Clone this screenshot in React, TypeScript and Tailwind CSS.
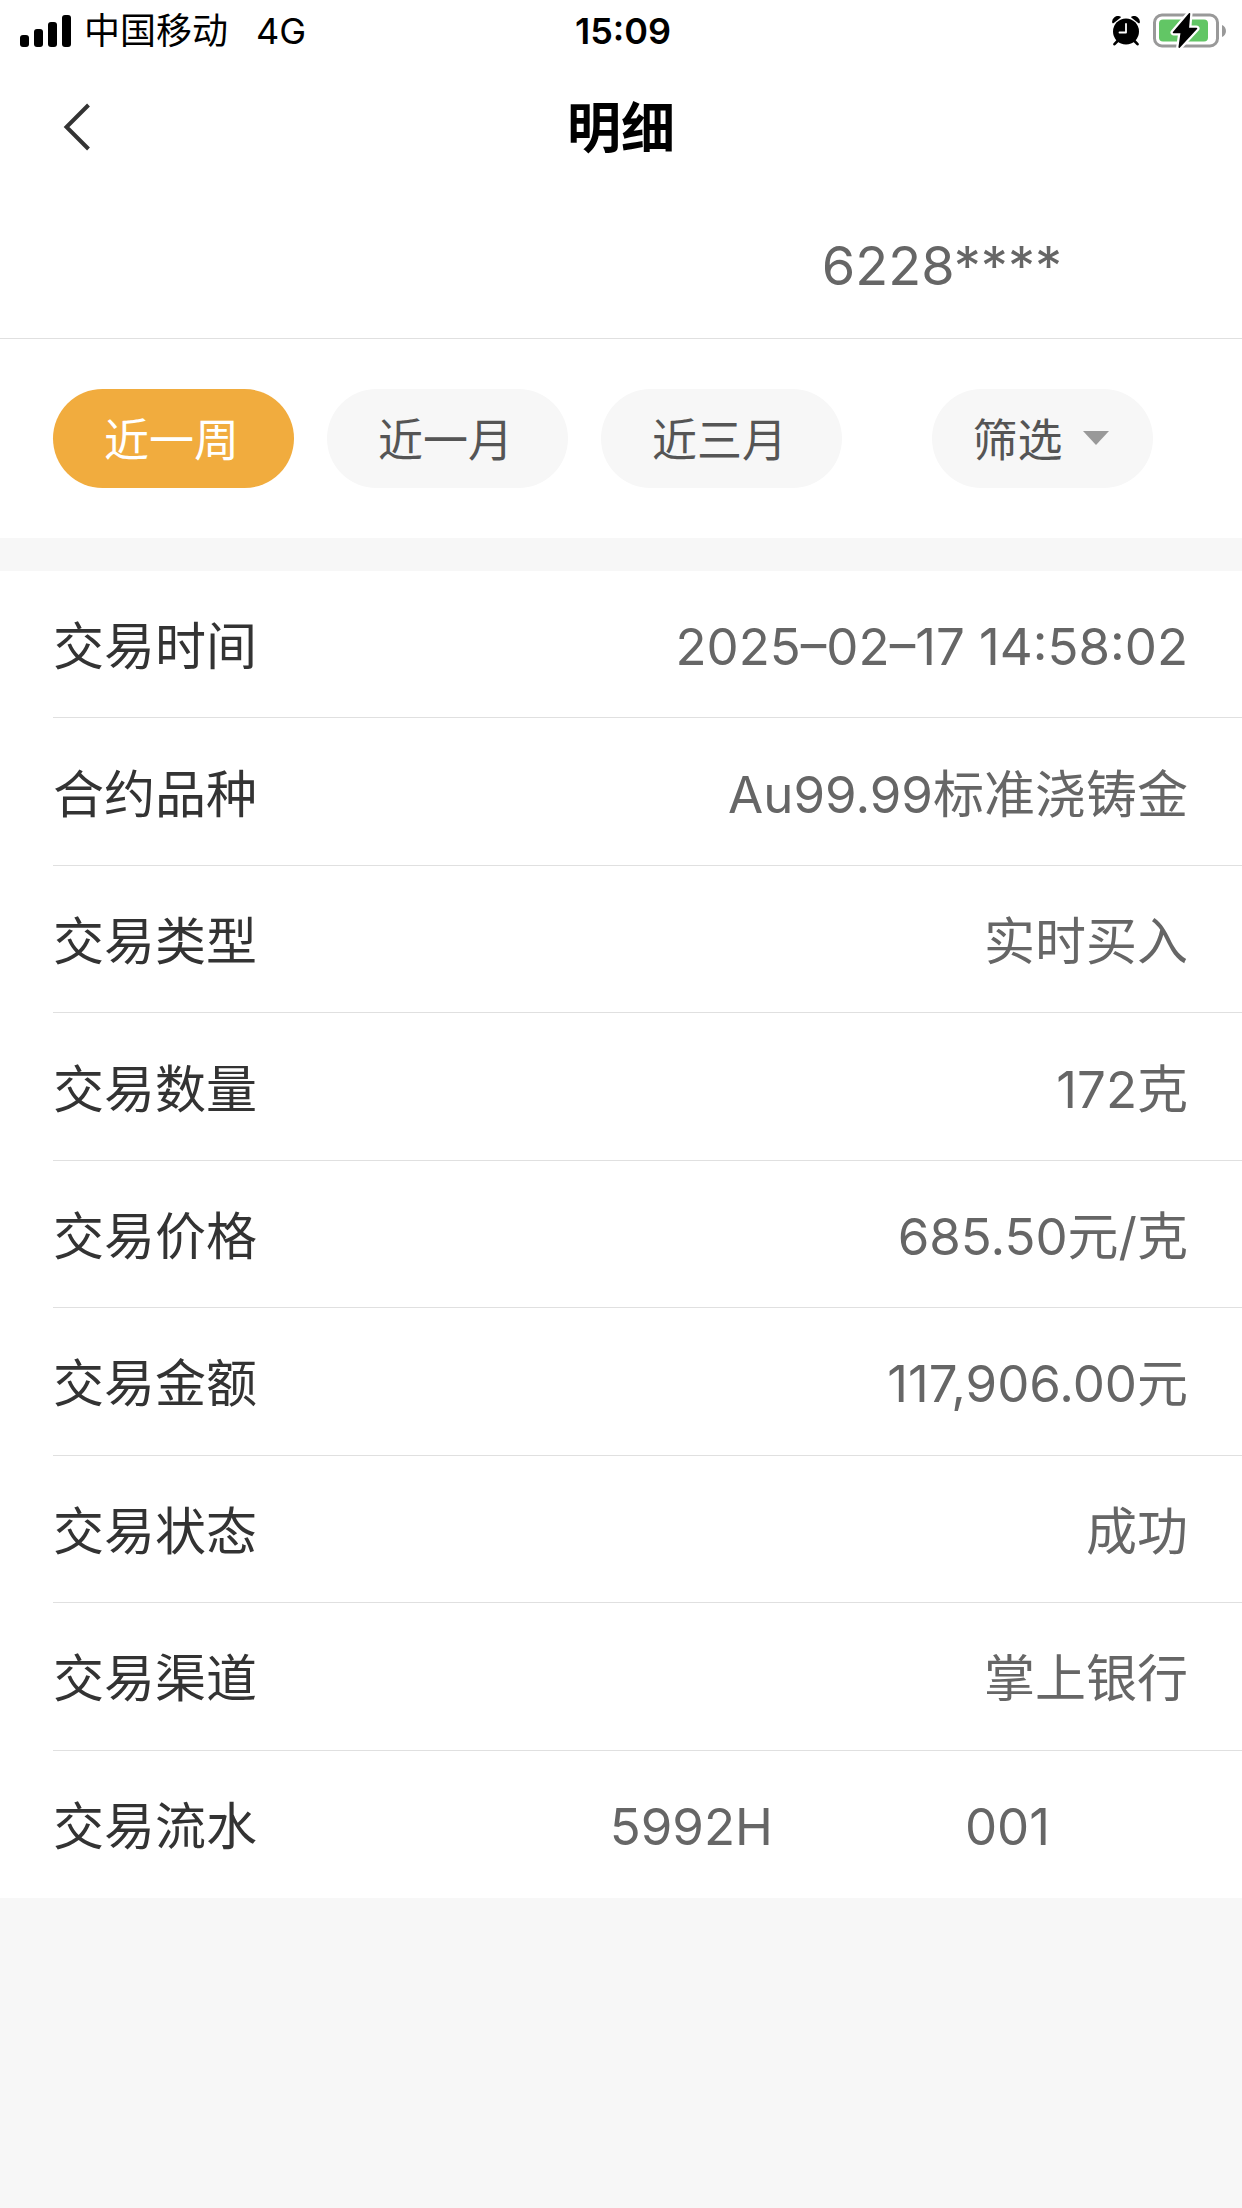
import { useState } from "react";

const periods = ["近一周", "近一月", "近三月"];

const details = [
  { label: "交易时间", value: "2025–02–17 14:58:02" },
  { label: "合约品种", value: "Au99.99标准浇铸金" },
  { label: "交易类型", value: "实时买入" },
  { label: "交易数量", value: "172克" },
  { label: "交易价格", value: "685.50元/克" },
  { label: "交易金额", value: "117,906.00元" },
  { label: "交易状态", value: "成功" },
  { label: "交易渠道", value: "掌上银行" },
];

function SignalIcon() {
  return (
    <svg width="52" height="32" viewBox="0 0 52 32" fill="#000" aria-hidden="true">
      <rect x="0" y="20" width="9" height="12" rx="3" />
      <rect x="14" y="14" width="9" height="18" rx="3" />
      <rect x="28" y="7" width="9" height="25" rx="3" />
      <rect x="42" y="0" width="9" height="32" rx="3" />
    </svg>
  );
}

function AlarmIcon() {
  return (
    <svg width="28" height="30" viewBox="0 0 28 30" aria-hidden="true">
      <path d="M1 6.5A5 5 0 0 1 8 1.2Z" fill="#000" stroke="#000" strokeWidth="1.6" strokeLinejoin="round" />
      <path d="M27 6.5A5 5 0 0 0 20 1.2Z" fill="#000" stroke="#000" strokeWidth="1.6" strokeLinejoin="round" />
      <path d="M5.5 25L2.5 28.2M22.5 25l3 3.2" stroke="#000" strokeWidth="2.6" strokeLinecap="round" />
      <circle cx="14" cy="15.5" r="13" fill="#000" />
      <path d="M14 8v8.5H7.5" fill="none" stroke="#fff" strokeWidth="1.8" strokeLinecap="round" strokeLinejoin="round" />
    </svg>
  );
}

function BatteryIcon() {
  const bolt = "M37.5 .8L21.5 19.5h7.800L27.2 34.2L44.5 15.5h-8.2Z";

  return (
    <svg width="74" height="36" viewBox="0 0 74 36" aria-hidden="true">
      <rect x="2.5" y="2" width="63" height="31" rx="7.5" fill="#fff" stroke="#999" strokeWidth="3" />
      <rect x="7" y="6.5" width="49" height="22" rx="4" fill="#62c665" />
      <path d="M70 12c5.3 2 5.3 10 0 12Z" fill="#999" />
      <path d={bolt} fill="#fff" stroke="#fff" strokeWidth="6" strokeLinejoin="round" />
      <path d={bolt} fill="#000" stroke="#000" strokeWidth="1.5" strokeLinejoin="round" />
    </svg>
  );
}

function StatusBar() {
  return (
    <div className="grid grid-cols-3 items-center h-[62px] pl-5 pr-4 text-[36px] text-black">
      <div className="flex items-center gap-3">
        <SignalIcon />
        <span>中国移动</span>
        <span className="ml-4">4G</span>
      </div>
      <span className="text-center font-semibold">15:09</span>
      <div className="flex items-center justify-end gap-3">
        <AlarmIcon />
        <BatteryIcon />
      </div>
    </div>
  );
}

export default function App() {
  const [period, setPeriod] = useState(periods[0]);

  return (
    <div className="min-h-screen bg-[#f7f7f7] font-['Inter','Noto_Sans_CJK_SC',sans-serif]">
      <header className="bg-white">
        <StatusBar />
        <div className="grid grid-cols-3 items-center h-[130px] px-[53px]">
          <button type="button" aria-label="返回" className="justify-self-start px-2 py-4">
            <svg width="32" height="50" viewBox="0 0 32 50" fill="none" stroke="#333" strokeWidth="4">
              <path d="M27.5 3L5.500 25l22 22" />
            </svg>
          </button>
          <h1 className="pt-1 text-center text-[54px] leading-[72px] font-bold text-black">明细</h1>
        </div>
        <p className="flex items-center justify-end h-[147px] pr-[180px] border-b border-[#e0e0e0] text-[54px] text-[#666]">
          6228****
        </p>
      </header>

      <div className="flex items-center px-[53px] py-[50px] gap-[33px] bg-white text-[45px] leading-[66px] text-[#555]">
        {periods.map((item) => (
          <button
            key={item}
            type="button"
            aria-pressed={item === period}
            onClick={() => setPeriod(item)}
            className={`w-[241px] h-[99px] pt-1 pr-1 rounded-full ${
              item === period ? "bg-[#f1ac3e] text-white" : "bg-[#f7f7f7]"
            }`}
          >
            {item}
          </button>
        ))}
        <button
          type="button"
          aria-haspopup="true"
          className="flex items-center justify-center gap-5 w-[221px] h-[99px] pt-1 pr-1 ml-[57px] rounded-full bg-[#f7f7f7]"
        >
          筛选
          <svg width="26" height="20" viewBox="0 0 26 20" fill="#999" aria-hidden="true">
            <path d="M0 0h26L13 14Z" />
          </svg>
        </button>
      </div>

      {/* rows share the height evenly */}
      <dl className="grid auto-rows-fr min-h-[1327px] mt-[33px] pl-[53px] bg-white text-[51px] leading-[76px]">
        {details.map(({ label, value }) => (
          <div key={label} className="flex items-center justify-between pt-1.5 pr-[54px] border-b border-[#e0e0e0]">
            <dt className="text-[#333]">{label}</dt>
            <dd className="text-[#666]">{value}</dd>
          </div>
        ))}
        <div className="flex items-center justify-between pt-1.5 pr-[192px]">
          <dt className="text-[#333]">交易流水</dt>
          <dd className="flex gap-[192px] text-[#666]">
            <span>5992H</span>
            <span>001</span>
          </dd>
        </div>
      </dl>
    </div>
  );
}
